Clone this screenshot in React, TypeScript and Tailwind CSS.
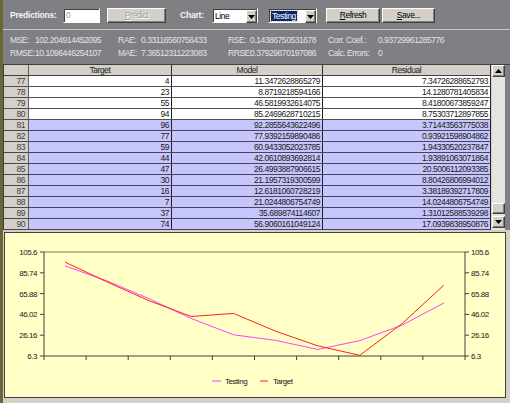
import clsx from 'clsx'

const rows: [number, string, string, string][] = [
  [77, '4', '11.3472628865279', '7.34726288652793'],
  [78, '23', '8.8719218594166', '14.1280781405834'],
  [79, '55', '46.5819932614075', '8.41800673859247'],
  [80, '94', '85.2469628710215', '8.75303712897855'],
  [81, '96', '92.2855643622496', '3.71443563775038'],
  [82, '77', '77.9392159890486', '0.93921598904862'],
  [83, '59', '60.9433052023785', '1.94330520237847'],
  [84, '44', '42.0610893692814', '1.93891063071864'],
  [85, '47', '26.4993887906615', '20.5006112093385'],
  [86, '30', '21.1957319300599', '8.80426806994012'],
  [87, '16', '12.6181060728219', '3.38189392717809'],
  [88, '7', '21.0244806754749', '14.0244806754749'],
  [89, '37', '35.689874114607', '1.31012588539298'],
  [90, '74', '56.9060161049124', '17.0939838950876'],
]

const target = [96, 77, 59, 44, 47, 30, 16, 7, 37, 74]
const testing = [
  92.2855643622496, 77.9392159890486, 60.9433052023785, 42.0610893692814, 26.4993887906615,
  21.1957319300599, 12.6181060728219, 21.0244806754749, 35.689874114607, 56.9060161049124,
]

// chart geometry in page coordinates
const X0 = 44
const X1 = 465
const Y0 = 252
const Y1 = 356
const yOf = (v: number) => Y1 - ((v - 6.3) * (Y1 - Y0)) / 99.3
const xOf = (i: number) => X0 + ((X1 - X0) / 10) * (i + 0.5)
const pts = (vals: number[]) => vals.map((v, i) => `${xOf(i).toFixed(1)},${yOf(v).toFixed(1)}`).join(' ')
const yTicks = ['105.6', '85.74', '65.88', '46.02', '26.16', '6.3']

function Arrow({ down = true }: { down?: boolean }) {
  return (
    <svg width="7" height="4" viewBox="0 0 7 4">
      <polygon points={down ? '0,0 7,0 3.5,4' : '0,4 7,4 3.5,0'} fill="#000" />
    </svg>
  )
}

function RaisedBox({ className, children }: { className?: string; children?: React.ReactNode }) {
  return (
    <div
      className={clsx(
        'flex items-center justify-center bg-[#d4d0c8] border border-t-white border-l-white border-r-[#404040] border-b-[#404040] shadow-[inset_-1px_-1px_0_#808080]',
        className,
      )}
    >
      {children}
    </div>
  )
}

function Select({ className, children }: { className?: string; children: React.ReactNode }) {
  return (
    <div
      className={clsx(
        'h-[15px] flex bg-white border border-t-[#808080] border-l-[#808080] border-r-white border-b-white shadow-[inset_1px_1px_0_#404040]',
        className,
      )}
    >
      <div className="flex-1 flex items-center pl-[2px] pt-px text-black">{children}</div>
      <RaisedBox className="w-[11px] h-[13px] mt-px">
        <Arrow />
      </RaisedBox>
    </div>
  )
}

function Stat({ label, value }: { label: string; value: string }) {
  return (
    <>
      <span>{label}</span>
      <span>{value}</span>
    </>
  )
}

export default function App() {
  return (
    <div className="w-[510px] h-[403px] overflow-hidden flex flex-col bg-[#807f84] border-l-[3px] border-[#6b6636] font-['Liberation_Sans',Arial,sans-serif] text-[8.5px] tracking-[-0.45px]">
      {/* toolbar */}
      <div className="h-[29px] flex items-start pt-[8px] pl-[7px] shrink-0">
        <span className="w-[53px] leading-[15px] font-bold text-[#f4f4f4] tracking-[-0.2px]">Predictions:</span>
        <div className="w-[37px] h-[15px] bg-white border border-t-[#808080] border-l-[#808080] border-r-white border-b-white shadow-[inset_1px_1px_0_#404040] pl-[2px] leading-[13px] text-[#a0a0a0]">
          0
        </div>
        <RaisedBox className="ml-[7px] w-[59px] h-[15px]">
          <span className="text-[#a0a0a0] [text-shadow:1px_1px_0_#fff]">
            <span className="underline">P</span>redict
          </span>
        </RaisedBox>
        <span className="ml-[14px] w-[32px] leading-[15px] font-bold text-[#f4f4f4] tracking-[-0.2px]">Chart:</span>
        <Select className="w-[46px]">Line</Select>
        <Select className="ml-[10px] w-[49px]">
          <span className="bg-[#0a246a] text-white px-[1px] leading-[10px] outline outline-1 outline-dotted outline-[#c0c0c0]">
            Testing
          </span>
        </Select>
        <RaisedBox className="ml-[9px] w-[54px] h-[15px] text-black">
          <span>
            <span className="underline">R</span>efresh
          </span>
        </RaisedBox>
        <RaisedBox className="ml-[2px] w-[53px] h-[15px] text-black">
          <span>
            <span className="underline">S</span>ave...
          </span>
        </RaisedBox>
      </div>
      <div className="h-px bg-[#c8c8c8] shrink-0" />

      {/* statistics */}
      <div className="h-[34px] pt-[4px] pl-[7px] shrink-0 text-[#e4e4e4]">
        <div className="grid grid-cols-[25px_83px_23px_87px_22px_78px_50px_1fr] leading-[13px]">
          <Stat label="MSE:" value="102.204914452095" />
          <Stat label="RAE:" value="0.33116560756433" />
          <Stat label="RSE:" value="0.14386750531678" />
          <Stat label="Corr. Coef.:" value="0.93729961285776" />
          <Stat label="RMSE:" value="10.1096446254107" />
          <Stat label="MAE:" value="7.36512311223083" />
          <Stat label="RRSE:" value="0.37929870197086" />
          <Stat label="Calc. Errors:" value="0" />
        </div>
      </div>

      {/* table */}
      <div className="h-[166px] shrink-0 flex border-t border-[#404040]">
        <div className="w-[488px] border-l border-[#404040] overflow-hidden text-[#202020]">
          <div className="flex h-[11px] bg-[#d4d0c8] border-b border-[#404040] leading-[10px]">
            <div className="w-[25px] border-r border-[#606060]" />
            <div className="w-[143px] border-r border-[#303030] text-center">Target</div>
            <div className="w-[151px] border-r border-[#303030] text-center">Model</div>
            <div className="flex-1 border-r border-[#303030] text-center">Residual</div>
          </div>
          {rows.map(([n, t, m, r]) => (
            <div
              key={n}
              className={clsx('flex h-[11px] border-b leading-[10px]', n >= 81 ? 'bg-[#c6c6fc] border-[#454560]' : 'bg-white border-[#505050]')}
            >
              <div className="w-[25px] bg-[#d4d0c8] border-r border-[#606060] text-right pr-[3px] text-[#404040]">{n}</div>
              <div className="w-[143px] border-r border-[#202020] text-right pr-[2px]">{t}</div>
              <div className="w-[151px] border-r border-[#202020] text-right pr-[2px]">{m}</div>
              <div className="flex-1 border-r border-[#202020] text-right pr-[2px]">{r}</div>
            </div>
          ))}
        </div>
        {/* vertical scrollbar */}
        <div className="w-[14px] flex flex-col bg-[#e6e4e0] border-l border-[#d4d0c8]">
          <RaisedBox className="w-[13px] h-[12px]">
            <Arrow down={false} />
          </RaisedBox>
          <div className="flex-1 flex flex-col justify-end">
            <RaisedBox className="w-[13px] h-[11px] mb-[2px]" />
          </div>
          <RaisedBox className="w-[13px] h-[12px] mb-[2px]">
            <Arrow />
          </RaisedBox>
        </div>
      </div>

      {/* chart panel */}
      <div className="flex-1 bg-[#d4d0c8] pl-[1px] pt-[2px] pr-[4px] pb-[5px] flex">
        <div className="flex-1 bg-[#ffffc6] border border-[#404040]">
          <svg width="500" height="164" viewBox="5 233 500 164" className="block">
            <g fontSize="8" fill="#202020" fontFamily="Liberation Sans, Arial, sans-serif">
              <line x1={X0} y1={Y0} x2={X1} y2={Y0} stroke="#7a7a60" />
              <line x1={X0} y1={Y0} x2={X0} y2={Y1} stroke="#404040" />
              <line x1={X1} y1={Y0} x2={X1} y2={Y1} stroke="#404040" />
              <line x1={X0} y1={Y1} x2={X1} y2={Y1} stroke="#404040" />
              {yTicks.map((lbl, i) => {
                const y = Y0 + ((Y1 - Y0) / 5) * i
                return (
                  <g key={lbl}>
                    <line x1={X0 - 4} y1={y} x2={X0} y2={y} stroke="#404040" />
                    <line x1={X1} y1={y} x2={X1 + 4} y2={y} stroke="#404040" />
                    <text x={X0 - 7} y={y + 3} textAnchor="end">
                      {lbl}
                    </text>
                    <text x={X1 + 6} y={y + 3}>
                      {lbl}
                    </text>
                  </g>
                )
              })}
              {Array.from({ length: 11 }, (_, i) => {
                const x = X0 + ((X1 - X0) / 10) * i
                return <line key={i} x1={x} y1={Y1} x2={x} y2={Y1 + 4} stroke="#404040" />
              })}
              <polyline points={pts(testing)} fill="none" stroke="#ff40ff" strokeWidth="1" />
              <polyline points={pts(target)} fill="none" stroke="#ff2020" strokeWidth="1" />
              <line x1="212" y1="381" x2="221" y2="381" stroke="#ff40ff" />
              <text x="225" y="384">
                Testing
              </text>
              <line x1="260" y1="381" x2="268" y2="381" stroke="#ff2020" />
              <text x="273" y="384">
                Target
              </text>
            </g>
          </svg>
        </div>
      </div>
    </div>
  )
}
